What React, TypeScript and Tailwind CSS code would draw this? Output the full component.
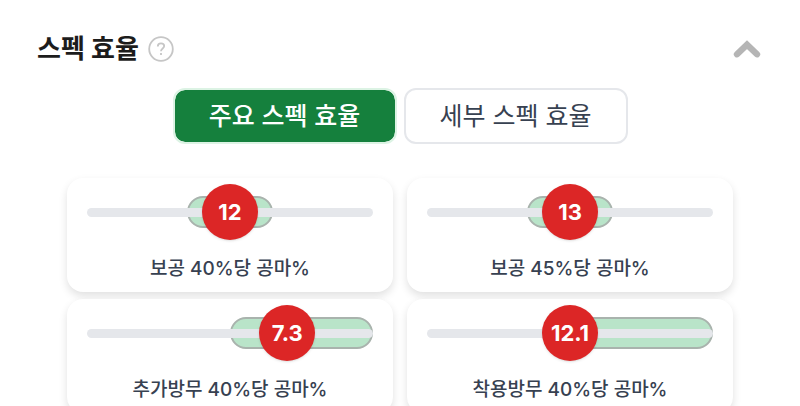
import { useState } from "react";

const TABS = [
  { key: "main", label: "주요 스펙 효율" },
  { key: "detail", label: "세부 스펙 효율" },
];

// position, from and to are percentages of the track
const STATS = [
  { label: "보공 40%당 공마%", value: 12, position: 50, from: 35, to: 65 },
  { label: "보공 45%당 공마%", value: 13, position: 50, from: 35, to: 65 },
  { label: "추가방무 40%당 공마%", value: 7.3, position: 70, from: 50, to: 100 },
  { label: "착용방무 40%당 공마%", value: 12.1, position: 50, from: 50, to: 100 },
];

type Stat = (typeof STATS)[number];

function StatCard({ label, value, position, from, to }: Stat) {
  return (
    <div className="rounded-2xl bg-white px-5 pt-1.5 pb-[7px] shadow-[0_4px_8px_rgba(0,0,0,0.12)]">
      <div className="relative flex h-14 items-center">
        <div
          className="absolute h-8 rounded-full border-2 border-[#a9b3ad] bg-[#b9e4c9]"
          style={{ left: `${from}%`, width: `${to - from}%` }}
        />
        <div className="relative h-[9px] w-full rounded-full bg-[#e5e7eb]" />
        <div
          className="absolute flex size-14 -translate-x-1/2 items-center justify-center rounded-full bg-[#dc2626] text-[22px] font-bold text-white shadow-sm"
          style={{ left: `${position}%` }}
        >
          {value}
        </div>
      </div>
      <p className="mt-[13px] text-center text-[19px] leading-8 font-medium text-[#374151]">{label}</p>
    </div>
  );
}

export default function App() {
  const [tab, setTab] = useState("main");
  const [open, setOpen] = useState(true);

  return (
    <main className="h-screen overflow-hidden bg-white font-['Inter','Noto_Sans_CJK_KR',sans-serif]">
      {/* Header */}
      <div className="flex items-center justify-between pt-[29px] pr-[39px] pl-[37px]">
        <div className="flex items-center gap-[9px]">
          <h2 className="text-[26px] leading-10 font-bold text-[#1c1c1c]">스펙 효율</h2>
          <button type="button" aria-label="도움말">
            <svg className="size-[26px]" viewBox="0 0 26 26" fill="none" stroke="#c6c6c6" strokeWidth="1.8">
              <circle cx="13" cy="13" r="11.8" />
              <path d="M9.8 10.4c0-2 1.3-3.1 3.2-3.1s3.2 1.1 3.2 2.8c0 2.4-3.2 2.5-3.2 5.2" />
              <path d="M13 17.1v1.9" />
            </svg>
          </button>
        </div>
        <button type="button" aria-label="접기" aria-expanded={open} onClick={() => setOpen(!open)}>
          <svg className="h-5 w-7" viewBox="0 0 28 20" fill="none" stroke="#b5b5b5" strokeWidth="6.4" strokeLinecap="round">
            <path d="M4 15.2L14 5.7L24 15.2" />
          </svg>
        </button>
      </div>

      {open && (
        <>
          {/* Tabs */}
          <div className="mt-[19px] flex justify-center gap-[7px]">
            {TABS.map((t) => (
              <button
                key={t.key}
                type="button"
                aria-pressed={tab === t.key}
                onClick={() => setTab(t.key)}
                className={`h-14 w-56 rounded-xl border-2 pt-0.5 text-[25px] ${
                  tab === t.key
                    ? "border-[#dcf3e4] bg-[#15803d] bg-clip-padding font-medium text-white"
                    : "border-[#e5e7eb] bg-white text-[#374151]"
                }`}
              >
                {t.label}
              </button>
            ))}
          </div>

          {/* Stats */}
          <div className="mt-[34px] grid grid-cols-2 gap-x-[14px] gap-y-[7px] px-[67px]">
            {STATS.map((s) => (
              <StatCard key={s.label} {...s} />
            ))}
          </div>
        </>
      )}
    </main>
  );
}
